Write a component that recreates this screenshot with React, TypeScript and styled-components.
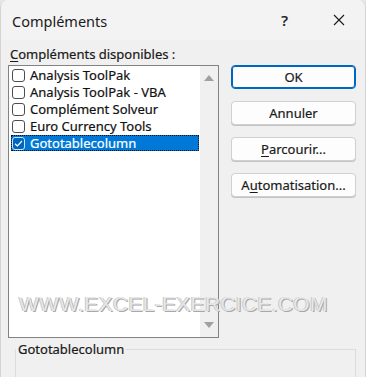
import React, { useState } from "react";
import styled, { createGlobalStyle } from "styled-components";

const GlobalStyle = createGlobalStyle`
  html, body {
    margin: 0;
    padding: 0;
    background: #e6e6e6;
  }
  body {
    font-family: "Noto Sans", "Open Sans", sans-serif;
    -webkit-text-stroke: 0.2px currentColor;
  }
`;

const addins = [
  { name: "Analysis ToolPak", checked: false },
  { name: "Analysis ToolPak - VBA", checked: false },
  { name: "Complément Solveur", checked: false },
  { name: "Euro Currency Tools", checked: false },
  { name: "Gototablecolumn", checked: true },
];

export default function App() {
  const [selected, setSelected] = useState(4);

  return (
    <>
      <GlobalStyle />
      <Window>
        <TitleBar>
          <Title>Compléments</Title>
          <TitleIcons>
            <HelpGlyph>?</HelpGlyph>
            <CloseGlyph viewBox="0 0 12 12" width="12" height="12">
              <path d="M1 1 L11 11 M11 1 L1 11" stroke="#1a1a1a" strokeWidth="1.1" />
            </CloseGlyph>
          </TitleIcons>
        </TitleBar>
        <Body>
          <Main>
            <LeftCol>
              <Label>
                <u>C</u>ompléments disponibles :
              </Label>
              <ListBox>
                <Items>
                  {addins.map((a, i) => (
                    <Item key={a.name} $active={i === selected} onClick={() => setSelected(i)}>
                      <Check $checked={a.checked} $active={i === selected}>
                        {a.checked && (
                          <svg viewBox="0 0 13 13" width="13" height="13">
                            <path d="M3 6.8 L5.4 9 L10 4" fill="none" stroke="#fff" strokeWidth="1.2" />
                          </svg>
                        )}
                      </Check>
                      <ItemText $active={i === selected}>{a.name}</ItemText>
                    </Item>
                  ))}
                </Items>
                <ScrollBar>
                  <Arrow viewBox="0 0 10 6" width="10" height="6">
                    <path d="M0 6 L5 0 L10 6 Z" fill="#a0a0a0" />
                  </Arrow>
                  <Arrow viewBox="0 0 10 6" width="10" height="6">
                    <path d="M0 0 L10 0 L5 6 Z" fill="#a0a0a0" />
                  </Arrow>
                </ScrollBar>
              </ListBox>
            </LeftCol>
            <Buttons>
              <Button $primary>OK</Button>
              <Button>Annuler</Button>
              <Button>
                <u>P</u>arcourir...
              </Button>
              <Button>
                A<u>u</u>tomatisation...
              </Button>
            </Buttons>
          </Main>
          <GroupBox>
            <Legend>Gototablecolumn</Legend>
          </GroupBox>
        </Body>
        <Watermark>WWW.EXCEL-EXERCICE.COM</Watermark>
      </Window>
    </>
  );
}

const Window = styled.div`
  position: relative;
  width: 364px;
  height: 377px;
  background: #f0f0f0;
  border-right: 1px solid #d4d4d4;
  border-left: 1px solid #d4d4d4;
  border-top-left-radius: 8px;
  border-top-right-radius: 8px;
  overflow: hidden;
  color: #1a1a1a;
`;

const TitleBar = styled.div`
  height: 40px;
  display: flex;
  align-items: center;
  justify-content: space-between;
  padding: 0 20px 0 11px;
  background: #f3f3f3;
`;

const Title = styled.div`
  font-size: 14.5px;
  margin-top: 1px;
  -webkit-text-stroke: 0;
`;

const TitleIcons = styled.div`
  display: flex;
  align-items: center;
  gap: 45px;
`;

const HelpGlyph = styled.span`
  font-size: 15px;
  font-weight: 500;
`;

const CloseGlyph = styled.svg`
  display: block;
`;

const Body = styled.div`
  padding: 5px 0 0 7px;
`;

const Main = styled.div`
  display: flex;
  gap: 12px;
`;

const LeftCol = styled.div`
  display: flex;
  flex-direction: column;
`;

const Label = styled.div`
  font-size: 13px;
  line-height: 18px;
  height: 20px;
  padding-left: 2px;
  u {
    text-decoration-thickness: 1px;
    text-underline-offset: 2px;
  }
`;

const ListBox = styled.div`
  width: 209px;
  height: 271px;
  border: 1px solid #828282;
  background: #fff;
  display: flex;
`;

const Items = styled.div`
  flex: 1;
  padding: 1px 1px 0 2px;
  display: flex;
  flex-direction: column;
  gap: 1px;
`;

const Item = styled.div<{ $active: boolean }>`
  display: flex;
  align-items: center;
  gap: 5px;
  height: 16px;
  padding-left: 1px;
  background: ${(p) => (p.$active ? "#0078d7" : "transparent")};
  outline: ${(p) => (p.$active ? "1px dotted #111" : "none")};
  outline-offset: -1px;
  cursor: default;
`;

const Check = styled.span<{ $checked: boolean; $active: boolean }>`
  box-sizing: border-box;
  flex: none;
  width: 13px;
  height: 13px;
  border: 1px solid ${(p) => (p.$active ? "#cfe4f7" : "#4d4d4d")};
  border-radius: 3px;
  background: ${(p) => (p.$checked ? "#0067c0" : "#fff")};
  display: flex;
  align-items: center;
  justify-content: center;
  svg {
    display: block;
    margin: -1px;
  }
`;

const ItemText = styled.span<{ $active: boolean }>`
  font-size: 13px;
  line-height: 16px;
  white-space: nowrap;
  color: ${(p) => (p.$active ? "#fff" : "#111")};
`;

const ScrollBar = styled.div`
  width: 18px;
  background: #f0f0f0;
  display: flex;
  flex-direction: column;
  justify-content: space-between;
  align-items: center;
  padding: 9px 0 9px;
`;

const Arrow = styled.svg`
  display: block;
`;

const Buttons = styled.div`
  display: flex;
  flex-direction: column;
  gap: 12px;
  padding-top: 20px;
`;

const Button = styled.button<{ $primary?: boolean }>`
  box-sizing: border-box;
  width: 125px;
  height: 24px;
  border-radius: 4px;
  border: 1px solid ${(p) => (p.$primary ? "#0067c0" : "#d0d0d0")};
  box-shadow: ${(p) => (p.$primary ? "inset 0 0 0 1px #0067c0" : "0 1px 0 #c4c4c4")};
  background: #fdfdfd;
  font-family: "Noto Sans", "Open Sans", sans-serif;
  font-size: 13px;
  color: #1a1a1a;
  -webkit-text-stroke: 0.2px #1a1a1a;
  padding: 0;
  u {
    text-decoration-thickness: 1px;
    text-underline-offset: 2px;
  }
`;

const GroupBox = styled.div`
  margin: 11px 9px 0 7px;
  height: 40px;
  border: 1px solid #dcdcdc;
  border-bottom: none;
  position: relative;
`;

const Legend = styled.span`
  position: absolute;
  top: -10px;
  left: 0;
  padding: 0 2px;
  background: #f0f0f0;
  font-size: 13px;
  line-height: 18px;
`;

const Watermark = styled.div`
  position: absolute;
  left: 18px;
  top: 292px;
  font-family: "Liberation Sans", Arial, sans-serif;
  font-size: 21px;
  letter-spacing: 0.3px;
  color: rgba(240, 240, 240, 0.85);
  -webkit-text-stroke: 0;
  text-shadow: 1px 1px 0 #a8a8a8, -1px 0 0 #c8c8c8;
  pointer-events: none;
  white-space: nowrap;
`;
